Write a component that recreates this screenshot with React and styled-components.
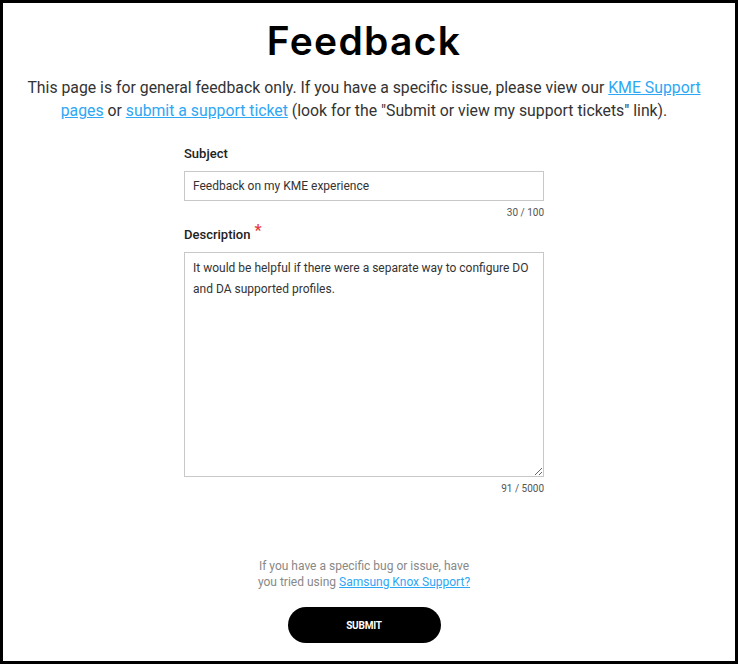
import React from 'react'
import styled, { createGlobalStyle } from 'styled-components'

const GlobalStyle = createGlobalStyle`
  html, body {
    margin: 0;
    padding: 0;
    background: #fff;
  }
  * {
    box-sizing: border-box;
  }
`

const Frame = styled.div`
  width: 738px;
  height: 664px;
  border: 3px solid #000;
  padding: 18px 10px 0 0;
  display: flex;
  flex-direction: column;
  align-items: center;
  font-family: Roboto, "Liberation Sans", sans-serif;
  color: #333;
`

const Title = styled.h1`
  margin: 0;
  font-family: Inter, "Liberation Sans", sans-serif;
  font-weight: 600;
  font-size: 39px;
  line-height: 40px;
  letter-spacing: 1.3px;
  color: #000;
`

const Intro = styled.p`
  margin: 15px 0 0;
  width: 690px;
  font-size: 15.8px;
  line-height: 23px;
  text-align: center;
  color: #333;
`

const Link = styled.a`
  color: #2ea7f5;
  text-decoration: underline;
  cursor: pointer;
`

const Form = styled.form`
  width: 360px;
  margin-top: 24px;
  display: flex;
  flex-direction: column;
`

const Label = styled.label`
  font-size: 13px;
  font-weight: 500;
  line-height: 16px;
  color: #222;
  margin-bottom: 9px;
`

const Required = styled.span`
  color: #e8383d;
  font-size: 16px;
  margin-left: 4px;
  vertical-align: 3px;
  line-height: 0;
`

const fieldBase = `
  width: 100%;
  border: 1px solid #c8c8c8;
  border-radius: 0;
  font-family: Roboto, "Liberation Sans", sans-serif;
  font-size: 12px;
  color: #333;
  background: #fff;
  padding: 0 8px;
  outline: none;
`

const Input = styled.input`
  ${fieldBase}
  height: 30px;
`

const TextArea = styled.textarea`
  ${fieldBase}
  height: 225px;
  padding: 5px 8px;
  line-height: 21px;
  resize: vertical;
  display: block;
`

const Counter = styled.div`
  text-align: right;
  font-size: 10px;
  line-height: 12px;
  color: #555;
  margin-top: ${({ $top }) => $top}px;
  margin-bottom: ${({ $bottom }) => $bottom}px;
`

const Footer = styled.div`
  margin-top: 64px;
  display: flex;
  flex-direction: column;
  align-items: center;
`

const Hint = styled.p`
  margin: 0;
  width: 220px;
  font-size: 12px;
  line-height: 15.5px;
  text-align: center;
  color: #888;
`

const SubmitButton = styled.button`
  margin-top: 17px;
  width: 153px;
  height: 36px;
  border: none;
  border-radius: 18px;
  background: #000;
  color: #fff;
  font-family: Roboto, "Liberation Sans", sans-serif;
  font-weight: 700;
  font-size: 10px;
  letter-spacing: -0.2px;
  cursor: pointer;
`

export default function App() {
  return (
    <>
      <GlobalStyle />
      <Frame>
        <Title>Feedback</Title>
        <Intro>
          This page is for general feedback only. If you have a specific issue, please view our{' '}
          <Link>KME Support pages</Link> or <Link>submit a support ticket</Link> (look for the
          "Submit or view my support tickets" link).
        </Intro>
        <Form onSubmit={(e) => e.preventDefault()}>
          <Label htmlFor="subject">Subject</Label>
          <Input id="subject" defaultValue="Feedback on my KME experience" />
          <Counter $top={6} $bottom={8}>30 / 100</Counter>
          <Label htmlFor="description">
            Description<Required>*</Required>
          </Label>
          <TextArea
            id="description"
            defaultValue="It would be helpful if there were a separate way to configure DO and DA supported profiles."
          />
          <Counter $top={6} $bottom={0}>91 / 5000</Counter>
        </Form>
        <Footer>
          <Hint>
            If you have a specific bug or issue, have you tried using <Link>Samsung Knox Support?</Link>
          </Hint>
          <SubmitButton type="button">SUBMIT</SubmitButton>
        </Footer>
      </Frame>
    </>
  )
}
